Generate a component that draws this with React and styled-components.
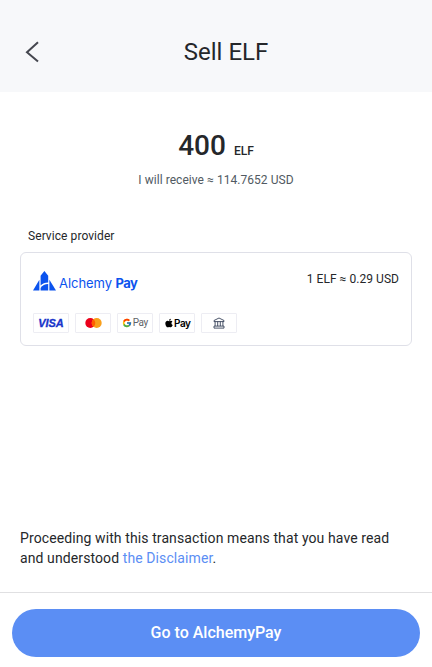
import React from 'react';
import styled, { createGlobalStyle } from 'styled-components';
import { FcGoogle } from 'react-icons/fc';
import { FaApple } from 'react-icons/fa';

const GlobalStyle = createGlobalStyle`
  * { box-sizing: border-box; }
  body { margin: 0; background: #fff; color: #25272a; font-family: Roboto, sans-serif; }
  button { font-family: inherit; padding: 0; border: 0; cursor: pointer; }
`;
const Page = styled.div`
  height: 667px;
  display: flex;
  flex-direction: column;
  overflow: hidden;
`;
const Header = styled.header`
  height: 92px;
  flex: none;
  display: grid;
  grid-template-columns: 40px 1fr 40px;
  align-items: center;
  padding: 12px 10px 0 20px;
  background: #f7f8fa;
`;
const BackButton = styled.button`
  display: flex;
  width: 24px;
  height: 24px;
  background: none;
`;
const Title = styled.h1`
  margin: 0;
  font-size: 24px;
  line-height: 32px;
  font-weight: 400;
  text-align: center;
  padding-left: 10px;
`;
const Main = styled.main`
  flex: 1;
  display: flex;
  flex-direction: column;
  padding: 34px 20px 24px;
`;
const Amount = styled.div`
  display: flex;
  justify-content: center;
  align-items: baseline;
  gap: 8px;
  line-height: 40px;
`;
const Value = styled.span`
  font-size: 28px;
  font-weight: 500;
`;
const Unit = styled.span`
  font-size: 12px;
  font-weight: 500;
`;
const Receive = styled.p`
  margin: 1px 0 0;
  font-size: 12px;
  line-height: 16px;
  letter-spacing: 0.05px;
  text-align: center;
  color: #515a62;
`;
const Label = styled.h2`
  margin: 40px 8px 8px;
  font-size: 12px;
  line-height: 16px;
  letter-spacing: 0.07px;
  font-weight: 400;
`;
const Card = styled.section`
  height: 94px;
  padding: 16px 12px 12px;
  border: 1px solid #dfe0e8;
  border-radius: 6px;
  display: flex;
  flex-direction: column;
  justify-content: space-between;
`;
const CardTop = styled.div`
  display: flex;
  justify-content: space-between;
`;
const Brand = styled.div`
  display: flex;
  align-items: center;
  height: 26px;
  gap: 3px;
  color: #0b53ee;
  svg { margin-bottom: 2px; }
`;
const BrandName = styled.span`
  font-family: Inter, sans-serif;
  font-size: 13px;
  letter-spacing: -0.05px;
  line-height: 18px;
  padding-top: 1px;
  white-space: nowrap;
  b { font-weight: 700; letter-spacing: -0.6px; }
`;
const Rate = styled.span`
  font-size: 12px;
  line-height: 20px;
  letter-spacing: 0.05px;
`;
const Methods = styled.div`
  display: flex;
  gap: 6px;
`;
const Method = styled.div`
  width: 36px;
  height: 20px;
  border: 1px solid #ededf3;
  border-radius: 1px;
  display: flex;
  align-items: center;
  justify-content: center;
  gap: ${(p) => p.$gap || 0}px;
`;
const Visa = styled.span`
  font: italic 700 11px/14px 'Liberation Sans', sans-serif;
  letter-spacing: -0.1px;
  -webkit-text-stroke: 0.3px #1734ca;
  color: #1734ca;
`;
const PayWord = styled.span`
  font-family: ${(p) => (p.$dark ? 'Inter' : 'Roboto')}, sans-serif;
  font-size: 10px;
  font-weight: ${(p) => (p.$dark ? 600 : 400)};
  letter-spacing: ${(p) => (p.$dark ? -0.5 : -0.4)}px;
  line-height: 12px;
  color: ${(p) => (p.$dark ? '#000' : '#5f6368')};
`;
const Notice = styled.p`
  margin: auto 0 0;
  font-size: 14px;
  line-height: 20px;
  letter-spacing: 0.1px;
`;
const Link = styled.a`
  color: #5b8ef4;
`;
const Footer = styled.footer`
  flex: none;
  height: 75px;
  padding: 16px 12px 10px;
  border-top: 1px solid #e0e0e2;
`;
const PrimaryButton = styled.button`
  display: block;
  width: 100%;
  height: 48px;
  padding-bottom: 2px;
  border-radius: 24px;
  background: #5b8ef4;
  color: #fff;
  font-size: 16px;
  font-weight: 500;
`;

const AlchemyMark = () => (
  <svg width="23" height="20" viewBox="0 0 23 20" fill="#0b53ee">
    <path d="M11.4 0 15.2 4.8V11.6C12 11.6 9.4 12.6 7.6 14.6V4.8Z" />
    <path d="M6.4 8.8V19.5H0Z" />
    <path d="M16.4 8.8 23 19.5H16.4Z" />
    <path d="M15.2 13V19.5H7.6V16.9C9.2 14.5 12 13.2 15.2 13Z" />
  </svg>
);
const Mastercard = () => (
  <svg width="17" height="10" viewBox="0 0 17 10">
    <circle cx="5.3" cy="5" r="5" fill="#eb001b" />
    <circle cx="11.7" cy="5" r="5" fill="#f99f1b" />
    <path d="M8.5 1.16a5 5 0 0 1 0 7.68a5 5 0 0 1 0-7.68Z" fill="#ff5f00" />
  </svg>
);
const Bank = () => (
  <svg width="12" height="12" viewBox="0 0 12 12" fill="none" stroke="#2c3850" strokeWidth="0.85">
    <path d="M1 4.6V3.5L6 1l5 2.5v1.1ZM2.1 4.6v4.5M4.7 4.6v4.5M7.3 4.6v4.5M9.9 4.6v4.5M1 9.1h10v2H1Z" />
  </svg>
);

export default function App() {
  return (
    <>
      <GlobalStyle />
      <Page>
        <Header>
          <BackButton aria-label="Back">
            <svg width="24" height="24" viewBox="0 0 24 24" fill="none" stroke="#45474f" strokeWidth="2">
              <path d="M18 2.2 7 12.2 18 21.4" />
            </svg>
          </BackButton>
          <Title>Sell ELF</Title>
        </Header>
        <Main>
          <Amount>
            <Value>400</Value>
            <Unit>ELF</Unit>
          </Amount>
          <Receive>I will receive ≈ 114.7652 USD</Receive>
          <Label>Service provider</Label>
          <Card>
            <CardTop>
              <Brand>
                <AlchemyMark />
                <BrandName>Alchemy <b>Pay</b></BrandName>
              </Brand>
              <Rate>1 ELF ≈ 0.29 USD</Rate>
            </CardTop>
            <Methods>
              <Method><Visa>VISA</Visa></Method>
              <Method><Mastercard /></Method>
              <Method $gap={0.5}><FcGoogle size={10} /><PayWord>Pay</PayWord></Method>
              <Method $gap={0.5}><FaApple size={10} color="#000" /><PayWord $dark>Pay</PayWord></Method>
              <Method><Bank /></Method>
            </Methods>
          </Card>
          <Notice>
            Proceeding with this transaction means that you have read and understood <Link>the Disclaimer</Link>.
          </Notice>
        </Main>
        <Footer>
          <PrimaryButton>Go to AlchemyPay</PrimaryButton>
        </Footer>
      </Page>
    </>
  );
}
